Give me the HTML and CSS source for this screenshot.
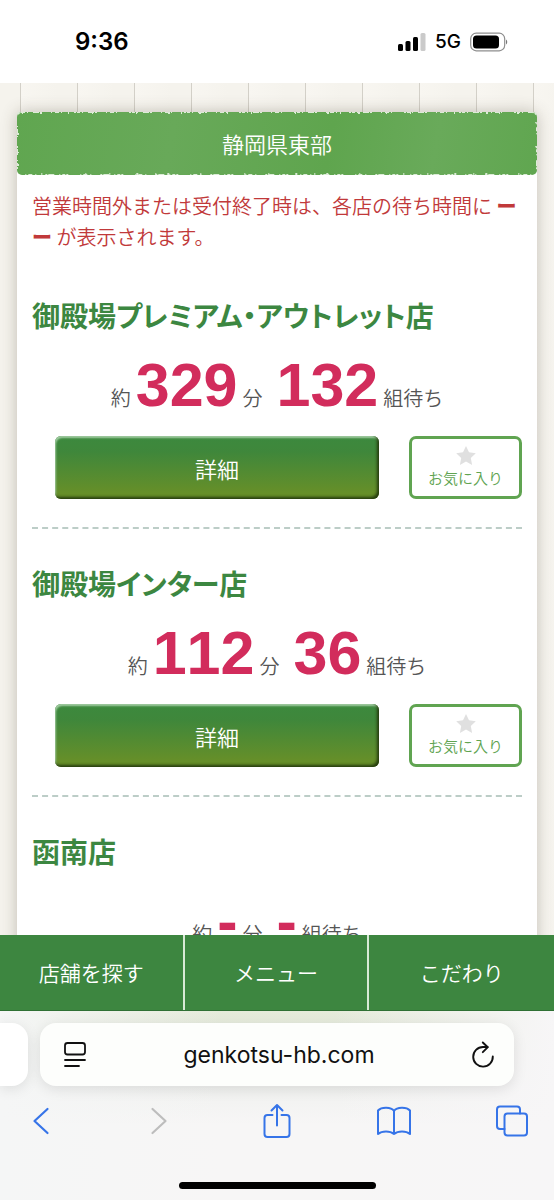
FILE: index.html
```
<!DOCTYPE html>
<html lang="ja">
<head>
<meta charset="utf-8">
<meta name="viewport" content="width=device-width, initial-scale=1">
<title>静岡県東部</title>
<link rel="stylesheet" href="styles.css">
</head>
<body>
<div class="phone">
  <header class="status">
    <span class="status-time">9:36</span>
    <div class="status-right">
      <svg width="28" height="18" viewBox="0 0 28 18" aria-hidden="true">
        <rect x="0" y="11" width="5" height="7" rx="1.5"/>
        <rect x="7.500" y="8" width="5" height="10" rx="1.5"/>
        <rect x="15" y="4" width="5" height="14" rx="1.500"/>
        <rect x="22.500" y="0" width="5" height="18" rx="1.500" fill="#cacaca"/>
      </svg>
      <span class="status-net">5G</span>
      <svg width="38" height="20" viewBox="0 0 38 20" aria-hidden="true">
        <rect x="0.700" y="1.200" width="34" height="17.600" rx="5.500" fill="none" stroke="#8e8e8e" stroke-width="1.200"/>
        <rect x="3" y="3.500" width="26" height="13" rx="3.500"/>
        <path d="M36 7.500c1.600.8 1.600 4.200 0 5z" fill="#777"/>
      </svg>
    </div>
  </header>

  <main class="page">
    <section class="card">
      <h1 class="area">静岡県東部
        <svg class="area-edge" aria-hidden="true">
          <rect class="edge edge-a" width="100%" height="100%" rx="5"/>
          <rect class="edge edge-b" width="100%" height="100%" rx="5"/>
        </svg>
      </h1>
      <div class="card-body">
        <p class="notice">営業時間外または受付終了時は、各店の待ち時間に <b>ー ー</b> が表示されます。</p>

        <article class="shop">
          <h2 class="shop-name">御殿場プレミアム・アウトレット店</h2>
          <p class="wait">約<strong>329</strong>分<strong class="groups">132</strong>組待ち</p>
          <div class="actions">
            <button class="detail" type="button">詳細</button>
            <button class="fav" type="button">
              <svg width="22" height="21" viewBox="0 0 22 21" aria-hidden="true"><path d="M11 1l3 6.300 6.800.9-5 4.800 1.300 6.900-6.100-3.400-6.100 3.400 1.300-6.900-5-4.800 6.800-.9z"/></svg>
              お気に入り
            </button>
          </div>
        </article>

        <article class="shop">
          <h2 class="shop-name">御殿場インター店</h2>
          <p class="wait">約<strong>112</strong>分<strong class="groups">36</strong>組待ち</p>
          <div class="actions">
            <button class="detail" type="button">詳細</button>
            <button class="fav" type="button">
              <svg width="22" height="21" viewBox="0 0 22 21" aria-hidden="true"><path d="M11 1l3 6.300 6.800.9-5 4.800 1.300 6.900-6.100-3.400-6.100 3.400 1.300-6.900-5-4.800 6.800-.9z"/></svg>
              お気に入り
            </button>
          </div>
        </article>

        <article class="shop">
          <h2 class="shop-name">函南店</h2>
          <p class="wait">約<strong>-</strong>分<strong class="groups">-</strong>組待ち</p>
        </article>
      </div>
    </section>
  </main>

  <nav class="site-nav">
    <a href="#shops">店舗を探す</a>
    <a href="#menu">メニュー</a>
    <a href="#about">こだわり</a>
  </nav>

  <footer class="browser">
    <div class="tabs">
      <div class="tab-prev"></div>
      <div class="address">
        <button type="button" aria-label="ページ設定">
          <svg width="24" height="28" viewBox="0 0 24 28" fill="none" stroke="#111" stroke-width="1.800" stroke-linecap="round" aria-hidden="true">
            <rect x="2" y="2" width="20" height="11.500" rx="2.500"/>
            <path d="M2 19h20M2 25h14"/>
          </svg>
        </button>
        <span class="url">genkotsu-hb.com</span>
        <button type="button" aria-label="再読み込み">
          <svg width="24" height="28" viewBox="0 0 24 28" fill="none" stroke="#111" stroke-width="1.900" stroke-linecap="round" stroke-linejoin="round" aria-hidden="true">
            <path d="M21.800 15.500A9.800 9.800 0 1 1 12 6h4.500"/>
            <path d="M11.800 1.500l5 4.700-5 5"/>
          </svg>
        </button>
      </div>
    </div>
    <div class="tools">
      <button type="button" aria-label="戻る">
        <svg width="18" height="28" viewBox="0 0 18 28"><path d="M15.500 2L2.500 14l13 12" stroke-width="2.200"/></svg>
      </button>
      <button type="button" aria-label="進む" disabled>
        <svg width="18" height="28" viewBox="0 0 18 28"><path d="M2.500 2l13 12-13 12" stroke-width="2.200"/></svg>
      </button>
      <button type="button" aria-label="共有">
        <svg width="28" height="36" viewBox="0 0 28 36"><path d="M9.500 12H4.500Q1.500 12 1.500 15v16q0 3 3 3h19q3 0 3-3V15q0-3-3-3h-5M14 22.500V2M8.500 7.500L14 2l5.500 5.500"/></svg>
      </button>
      <button type="button" aria-label="ブックマーク">
        <svg width="36" height="30" viewBox="0 0 36 30"><path d="M18 5C15 .8 5.500.8 2 4.500V28c4-3.500 12-3.500 16 0 4-3.500 12-3.500 16 0V4.500C30.500.8 21 .8 18 5zV28"/></svg>
      </button>
      <button type="button" aria-label="タブ">
        <svg width="34" height="32" viewBox="0 0 34 32"><rect x="9.500" y="8.500" width="22.500" height="22" rx="3"/><path d="M9.500 24H5q-3 0-3-3V4.500q0-3 3-3h17q3 0 3 3v4"/></svg>
      </button>
    </div>
    <div class="home"></div>
  </footer>
</div>
</body>
</html>
```
FILE: styles.css
```
* {
  box-sizing: border-box;
}

body,
h1,
h2,
p {
  margin: 0;
}

body {
  font-family: "Noto Sans CJK JP", sans-serif;
  font-weight: 350;
}

button {
  padding: 0;
  border: 0;
  background: none;
  font: inherit;
}

svg {
  display: block;
}

.phone {
  display: flex;
  flex-direction: column;
  height: 100vh;
  background: #fff;
}

.status {
  display: flex;
  flex: none;
  align-items: center;
  justify-content: space-between;
  height: 83px;
  padding: 0 46px 0 75px;
  font-family: Inter, sans-serif;
}

.status-time {
  font-size: 24px;
  font-weight: 600;
}

.status-right {
  display: flex;
  align-items: center;
  gap: 9px;
}

.status-net {
  font-size: 19px;
  font-weight: 500;
}

.page {
  flex: 1;
  min-height: 0;
  padding: 29px 17px 0;
  overflow: hidden;
  background: repeating-linear-gradient(90deg, #f5f3ed 0 20px, #d3d0c8 20px 21px, #f8f6f1 21px, #f5f3ed 57px);
}

.card {
  border-radius: 5px 5px 0 0;
  background: #fff;
  box-shadow: 0 0 16px rgba(70, 60, 40, 0.3);
}

.area {
  position: relative;
  border-radius: 5px;
  background: linear-gradient(100deg, #60a650, #68a959 30%, #5fa54e 60%, #69aa5a 80%, #60a650);
  color: #fff;
  font-size: 22px;
  font-weight: 350;
  line-height: 63px;
  text-align: center;
}

.area-edge {
  position: absolute;
  inset: 0;
  width: 100%;
  height: 100%;
}

.edge {
  fill: none;
  stroke: #dcecd7;
}

.edge-a {
  stroke-width: 2;
  stroke-dasharray: 3 2 1 5 6 1 2 9 1 3 4 2 1 12 2 1;
}

.edge-b {
  stroke-width: 4;
  stroke-dasharray: 1 17 2 26 1 23 1 43 1 31 2 11;
}

.card-body {
  padding: 15px 15px 0;
}

.notice {
  margin-bottom: 9px;
  color: #c1393a;
  font-size: 20px;
  line-height: 31px;
}

.notice b {
  font-weight: 900;
}

.shop {
  padding: 34px 0 28px;
  border-bottom: 2px dashed #bccdc7;
}

.shop-name {
  color: #3c8741;
  font-size: 28px;
  font-weight: 700;
  font-feature-settings: "palt";
  line-height: 40px;
}

.wait {
  display: flex;
  align-items: baseline;
  justify-content: center;
  margin: 16px 0 17px;
  color: #555;
  font-size: 20px;
  line-height: 24px;
}

.wait strong {
  margin: 0 5px;
  color: #d22c5c;
  font-family: "Liberation Sans", Arial, sans-serif;
  font-size: 61px;
  font-weight: 700;
  font-kerning: none;
  line-height: 68px;
}

.wait .groups {
  margin-left: 14px;
}

.actions {
  display: flex;
  gap: 30px;
  margin-left: 23px;
}

.detail {
  flex: 1;
  height: 63px;
  border-radius: 6px;
  background: linear-gradient(#3c893e, #3f873b 25%, #668f29 90%);
  box-shadow: inset -2px -2px 3px #263c0e, inset 1px 2px 2px #a4cfa5;
  color: #fff;
  font-size: 22px;
}

.fav {
  display: flex;
  flex-direction: column;
  align-items: center;
  justify-content: center;
  width: 113px;
  height: 63px;
  border: 3px solid #60a451;
  border-radius: 7px;
  background: #fff;
  color: #60a451;
  font-size: 15px;
  line-height: 24px;
}

.fav svg {
  fill: #e0e0e0;
}

.site-nav {
  display: grid;
  flex: none;
  grid-template-columns: repeat(3, 1fr);
  border-bottom: 1px solid #2f7034;
}

.site-nav a {
  border-right: 2px solid #d8ead6;
  background: #3d8640;
  color: #fff;
  font-size: 21px;
  line-height: 75px;
  text-align: center;
  text-decoration: none;
}

.site-nav a:last-child {
  border-right: 0;
}

.browser {
  flex: none;
  padding: 12px 0 11px;
  background: linear-gradient(90deg, #f5f6f6, rgba(245, 246, 246, 0) 40% 60%, #f7f6f7), linear-gradient(#e5ebda, #f0f1ef 40%, #f7f6f6 60%);
}

.tabs {
  display: flex;
  gap: 12px;
  padding-right: 40px;
}

.tab-prev {
  width: 28px;
  border-radius: 0 16px 16px 0;
  background: #fff;
  box-shadow: 0 3px 14px rgba(0, 0, 0, 0.1);
}

.address {
  display: flex;
  flex: 1;
  align-items: center;
  justify-content: space-between;
  height: 63px;
  padding: 0 19px 0 23px;
  border-radius: 16px;
  background: #fdfefc;
  box-shadow: 0 3px 14px rgba(0, 0, 0, 0.1);
}

.url {
  color: #111;
  font-family: Inter, sans-serif;
  font-size: 23px;
  font-weight: 400;
}

.tools {
  display: flex;
  align-items: center;
  justify-content: space-between;
  height: 70px;
  padding: 0 24px 0 23px;
}

.tools button {
  display: flex;
  justify-content: center;
  width: 36px;
}

.tools svg {
  fill: none;
  stroke: #3674e8;
  stroke-width: 2;
  stroke-linecap: round;
  stroke-linejoin: round;
}

.tools button:disabled svg {
  stroke: #bdbdbd;
}

.home {
  width: 197px;
  height: 7px;
  margin: 26px auto 0;
  border-radius: 4px;
  background: #000;
}
```
